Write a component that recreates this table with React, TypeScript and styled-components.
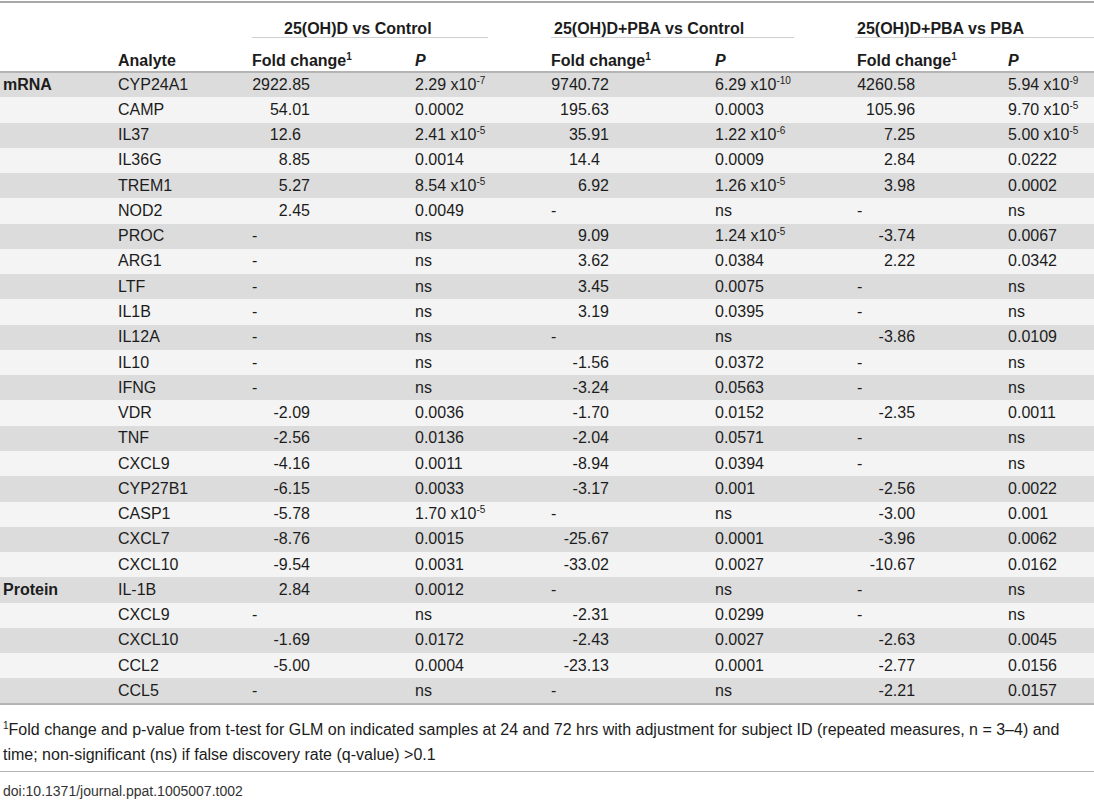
import React from 'react'
import styled, { createGlobalStyle } from 'styled-components'

type Val = string
type Row = [string, string, Val, Val, Val, Val, Val, Val]

// cells that read like "2.29 x10^-7" get a real superscript
const rows: Row[] = [
	['mRNA', 'CYP24A1', '2922.85', '2.29 x10^-7', '9740.72', '6.29 x10^-10', '4260.58', '5.94 x10^-9'],
	['', 'CAMP', '54.01', '0.0002', '195.63', '0.0003', '105.96', '9.70 x10^-5'],
	['', 'IL37', '12.6', '2.41 x10^-5', '35.91', '1.22 x10^-6', '7.25', '5.00 x10^-5'],
	['', 'IL36G', '8.85', '0.0014', '14.4', '0.0009', '2.84', '0.0222'],
	['', 'TREM1', '5.27', '8.54 x10^-5', '6.92', '1.26 x10^-5', '3.98', '0.0002'],
	['', 'NOD2', '2.45', '0.0049', '-', 'ns', '-', 'ns'],
	['', 'PROC', '-', 'ns', '9.09', '1.24 x10^-5', '-3.74', '0.0067'],
	['', 'ARG1', '-', 'ns', '3.62', '0.0384', '2.22', '0.0342'],
	['', 'LTF', '-', 'ns', '3.45', '0.0075', '-', 'ns'],
	['', 'IL1B', '-', 'ns', '3.19', '0.0395', '-', 'ns'],
	['', 'IL12A', '-', 'ns', '-', 'ns', '-3.86', '0.0109'],
	['', 'IL10', '-', 'ns', '-1.56', '0.0372', '-', 'ns'],
	['', 'IFNG', '-', 'ns', '-3.24', '0.0563', '-', 'ns'],
	['', 'VDR', '-2.09', '0.0036', '-1.70', '0.0152', '-2.35', '0.0011'],
	['', 'TNF', '-2.56', '0.0136', '-2.04', '0.0571', '-', 'ns'],
	['', 'CXCL9', '-4.16', '0.0011', '-8.94', '0.0394', '-', 'ns'],
	['', 'CYP27B1', '-6.15', '0.0033', '-3.17', '0.001', '-2.56', '0.0022'],
	['', 'CASP1', '-5.78', '1.70 x10^-5', '-', 'ns', '-3.00', '0.001'],
	['', 'CXCL7', '-8.76', '0.0015', '-25.67', '0.0001', '-3.96', '0.0062'],
	['', 'CXCL10', '-9.54', '0.0031', '-33.02', '0.0027', '-10.67', '0.0162'],
	['Protein', 'IL-1B', '2.84', '0.0012', '-', 'ns', '-', 'ns'],
	['', 'CXCL9', '-', 'ns', '-2.31', '0.0299', '-', 'ns'],
	['', 'CXCL10', '-1.69', '0.0172', '-2.43', '0.0027', '-2.63', '0.0045'],
	['', 'CCL2', '-5.00', '0.0004', '-23.13', '0.0001', '-2.77', '0.0156'],
	['', 'CCL5', '-', 'ns', '-', 'ns', '-2.21', '0.0157'],
]

const groups = [
	{ title: '25(OH)D vs Control', indent: 32, last: false },
	{ title: '25(OH)D+PBA vs Control', indent: 3, last: false },
	{ title: '25(OH)D+PBA vs PBA', indent: 2, last: true },
]

const widths = [115, 134, 163, 136, 164, 142, 151, 89]

function PValue({ value }: { value: string }) {
	const [base, exp] = value.split('^')
	if (!exp) return <>{value}</>
	return (
		<>
			{base}
			<Sup>{exp}</Sup>
		</>
	)
}

function Fold({ value }: { value: string }) {
	if (value === '-') return <>-</>
	const oneDecimal = value.split('.')[1]?.length === 1
	return <Num $pad={oneDecimal}>{value}</Num>
}

export default function App() {
	return (
		<>
			<GlobalStyle />
			<Page>
				<Table>
					<colgroup>
						{widths.map((w, i) => (
							<col key={i} style={{ width: w }} />
						))}
					</colgroup>
					<thead>
						<tr>
							<GroupCell />
							<GroupCell />
							{groups.map((g) => (
								<GroupCell key={g.title} colSpan={2}>
									<GroupLabel $indent={g.indent} $last={g.last}>
										{g.title}
									</GroupLabel>
								</GroupCell>
							))}
						</tr>
						<tr>
							<HeadCell />
							<HeadCell>Analyte</HeadCell>
							{groups.map((g) => (
								<React.Fragment key={g.title}>
									<HeadCell>
										Fold change<Sup>1</Sup>
									</HeadCell>
									<HeadCell>
										<em>P</em>
									</HeadCell>
								</React.Fragment>
							))}
						</tr>
					</thead>
					<tbody>
						{rows.map((r, i) => (
							<BodyRow key={i} $dark={i % 2 === 0}>
								<KindCell>{r[0]}</KindCell>
								<Cell>{r[1]}</Cell>
								<Cell>
									<Fold value={r[2]} />
								</Cell>
								<Cell>
									<PValue value={r[3]} />
								</Cell>
								<Cell>
									<Fold value={r[4]} />
								</Cell>
								<Cell>
									<PValue value={r[5]} />
								</Cell>
								<Cell>
									<Fold value={r[6]} />
								</Cell>
								<Cell>
									<PValue value={r[7]} />
								</Cell>
							</BodyRow>
						))}
					</tbody>
				</Table>

				<Footnote>
					<Sup>1</Sup>Fold change and p-value from t-test for GLM on indicated samples at 24 and 72 hrs with
					adjustment for subject ID (repeated measures, n = 3–4) and time; non-significant (ns) if false
					discovery rate (q-value) &gt;0.1
				</Footnote>
				<Doi>doi:10.1371/journal.ppat.1005007.t002</Doi>
			</Page>
		</>
	)
}

const GlobalStyle = createGlobalStyle`
	html, body {
		margin: 0;
		padding: 0;
		background: #fff;
		overflow: hidden;
	}
	body {
		font-family: "Liberation Sans", Arial, Helvetica, sans-serif;
		color: #1c1c1c;
	}
`

const Page = styled.div`
	width: 1094px;
	padding-top: 1px;
`

const Table = styled.table`
	width: 1094px;
	table-layout: fixed;
	border-collapse: collapse;
	border-top: 2px solid #a8a8a8;
	font-size: 16px;
`

const GroupCell = styled.th`
	padding: 18px 0 0 0;
	text-align: left;
	font-weight: bold;
	vertical-align: bottom;
`

const GroupLabel = styled.div<{ $indent: number; $last: boolean }>`
	margin-left: ${(p) => (p.$last ? 1 : 3)}px;
	margin-right: ${(p) => (p.$last ? 0 : 60)}px;
	padding-left: ${(p) => p.$indent}px;
	line-height: 16px;
	border-bottom: 1px solid #cfcfcf;
	white-space: nowrap;
`

const HeadCell = styled.th`
	padding: 14px 0 1px 3px;
	line-height: 18px;
	text-align: left;
	font-weight: bold;
	white-space: nowrap;
	border-bottom: 2px solid #b4b4b4;

	em {
		font-style: italic;
	}
`

const BodyRow = styled.tr<{ $dark: boolean }>`
	height: 25.28px;
	background: ${(p) => (p.$dark ? '#dcdcdc' : '#f4f4f4')};

	&:last-child {
		border-bottom: 2px solid #b4b4b4;
	}
`

const Cell = styled.td`
	padding: 0 0 0 3px;
	line-height: 18px;
	white-space: nowrap;
	vertical-align: middle;
`

const KindCell = styled(Cell)`
	font-weight: bold;
`

const Num = styled.span<{ $pad: boolean }>`
	display: inline-block;
	width: 58px;
	box-sizing: border-box;
	text-align: right;
	padding-right: ${(p) => (p.$pad ? 9 : 0)}px;
`

const Sup = styled.sup`
	font-size: 10px;
	line-height: 0;
	vertical-align: 6px;
`

const Footnote = styled.p`
	margin: 12px 0 0;
	padding: 0 3px;
	font-size: 16px;
	line-height: 25px;
	padding-bottom: 4px;
	border-bottom: 1px solid #b4b4b4;
`

const Doi = styled.div`
	padding: 10px 3px 0;
	font-size: 14px;
	line-height: 18px;
	color: #333;
`
